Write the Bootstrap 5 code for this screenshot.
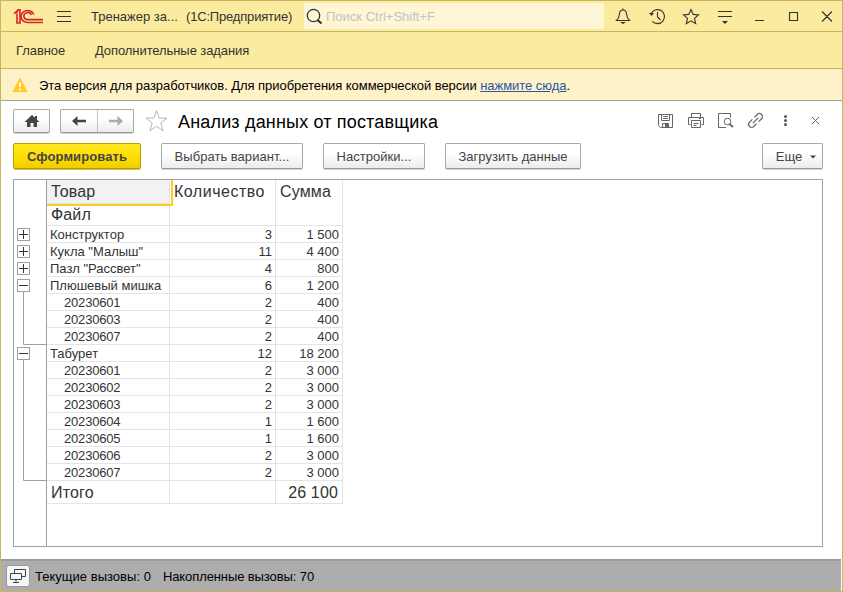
<!DOCTYPE html>
<html lang="ru">
<head>
<meta charset="utf-8">
<title>Анализ данных от поставщика</title>
<link href="https://cdn.jsdelivr.net/npm/bootstrap@5.3.0/dist/css/bootstrap.min.css" rel="stylesheet">
<style>
html,body{height:100%;overflow:hidden}
body{font-family:"Liberation Sans",Arial,sans-serif;font-size:13px;line-height:16px;color:#000;background:#fff}
svg{display:block;flex:none}
.win{width:843px;height:592px;border:1px solid #c8b560}
.win>*{flex:none}
.bar-title{height:31px;background:#fbeb9e;border-bottom:1px solid #c8b560;color:#333}
.bar-title>*,.bar-menu>*,.bar-info>*{flex:none}
.bar-title span{padding-top:1px}
.bar-menu{height:37px;background:#fbeb9e;border-bottom:1px solid #c8b560;color:#333;padding:2px 0 0 15px}
.bar-info{height:32px;background:#fff2c8;border-bottom:1px solid #a0a0a0;padding-left:11px}
.bar-info a{color:#2a56a5;text-decoration:underline}
.t-app{width:95px;margin-left:14px;letter-spacing:0}
.t-ent{width:118px;letter-spacing:-.18px}
.t-menu1{width:79px;letter-spacing:-.08px}
.t-menu2{letter-spacing:-.08px}
.t-info{letter-spacing:-.05px;margin-left:11px;padding-top:2px}
.search-box{width:300px;height:26px;background:#fff6d6;border-radius:2px;color:#c3c3c3;padding-left:2px}
.search-box span{margin-left:4px}
.tool-row{height:36px;padding-left:12px;margin-top:2px}
.cmd-row{height:27px;padding-left:12px;margin-top:4px}
.btn1c{--bs-btn-padding-x:0;--bs-btn-padding-y:0;--bs-btn-font-size:13px;--bs-btn-line-height:16px;--bs-btn-color:#444;--bs-btn-border-color:#a8a8a8;--bs-btn-border-radius:2px;height:26px;background:linear-gradient(#fff 40%,#ececec);border-bottom-color:#999;box-shadow:0 1px 0 #d4d4d4;letter-spacing:.03px;flex:none}
.cmd-row .btn1c{padding-top:2px}
.btn-home{width:37px;height:24px}
.btn-pair{width:74px;height:24px;margin-left:10px}
.pair-half{width:36px;height:22px}
.pair-half+.pair-half{border-left:1px solid #c4c4c4}
.btn-run{width:128px;background:linear-gradient(#ffe924,#ffdf00 50%,#f0cd00);border-color:#b5a000;box-shadow:0 1px 0 #d0c060;font-weight:700;letter-spacing:.1px}
.cmd-gap{margin-left:20px}
.w-var{width:142px}.w-set{width:102px}.w-load{width:136px}.w-more{width:61px;padding-left:7px;margin-right:19px}
.fav-star{margin-left:10px}
.form-title{font-size:18px;line-height:22px;margin-left:10px;letter-spacing:.17px;padding-top:1px}
.form-icons{margin-right:20px}
.report{width:810px;height:368px;margin:9px 0 0 12px;border:1px solid #a0a0a0}
.gutter{width:33px;height:366px;border-right:1px solid #a0a0a0}
.grid-t{border-collapse:separate;border-spacing:0;table-layout:fixed;width:296px;color:#333;font-size:13px;line-height:14px}
.grid-t td{height:17px;padding:2px 3px 0;border-right:1px solid #e4e4e4;border-bottom:1px solid #e4e4e4;white-space:nowrap}
.grid-t .sub-item{padding-left:17px;letter-spacing:-.18px}
.grid-t .num{text-align:right}
.grid-t .big td{font-size:16px;line-height:20px;padding:0 4px;letter-spacing:.15px}
.grid-t .h1r td{height:24px}.grid-t .h2r td{height:22px}
.grid-t .tot td{height:23px;padding-top:2px}
.grid-t .h1r .span-head{padding-top:2px}
.grid-t .h1r .qty-head{letter-spacing:.5px}
.grid-t .cur{background:#f2f2f2}
.focus-mark{left:0;top:0;width:126px;height:26px;border:solid #fc2;border-width:0 2px 2px 0}
.status{height:32px;width:840px;margin-top:12px;background:#adadad;border-top:2px solid #9c9c9c;padding-left:5px}
.status span{padding-top:1px}
.st-cur{margin-left:5px;letter-spacing:.02px}
.st-acc{margin-left:12px;letter-spacing:-.1px}
.status-btn{width:24px;height:22px;background:#f6f6f6;border:1px solid #999;border-radius:3px}
</style>
</head>
<body>
<div class="win d-flex flex-column">
  <header class="bar-title d-flex align-items-center">
    <svg width="76" height="30" viewBox="1 1 76 30" fill="none">
      <g stroke="#d8232a" stroke-width="1.600"><path d="M14.200 13.800l2.800-2.800v2.600M17 14v9h3V9.800h-1.500L14.500 13.500"/><path d="M33.800 14.500a6.600 6 0 1 0-5.800 8H43M31.300 15a3.800 3.500 0 1 0-3.400 4.600H43"/></g>
      <path d="M57 11.500h14M57 16.500h14M57 21.500h14" stroke="#333"/>
    </svg>
    <span class="t-app">Тренажер за...</span><span class="t-ent">(1С:Предприятие)</span>
    <div class="search-box d-flex align-items-center">
      <svg width="16" height="18" fill="none" stroke="#333"><circle cx="7.500" cy="8.500" r="6.200" stroke-width="1.300"/><path d="M11.500 13l4 3.500" stroke-width="2.200"/></svg>
      <span>Поиск Ctrl+Shift+F</span>
    </div>
    <svg width="237" height="30" viewBox="604 1 237 30" fill="none" stroke="#333" stroke-width="1.100">
      <path d="M616.500 20.500h13c-1.800-1.600-2.600-3-2.800-5.700c-.2-3.200-1.500-4.800-3.700-4.800s-3.500 1.600-3.700 4.800c-.2 2.700-1 4.100-2.800 5.700zM623 10V8.500"/><path d="M620 22h6l-3 2z" fill="#333" stroke="none"/>
      <path d="M651 14a7 7 0 1 1 1.300 7.300M657.500 12v5l3 3"/><path d="M649 13h5l-2.500 3z" fill="#333" stroke="none"/>
      <path d="M691 9.500l2.200 4.900 5.300.5-4 3.500 1.200 5.200-4.700-2.800-4.700 2.800 1.200-5.200-4-3.500 5.300-.5z"/>
      <path d="M718 11.500h14M718 16.500h14"/><path d="M722 21h6l-3 3z" fill="#333" stroke="none"/>
      <path d="M755 20.500h9M789.500 12.500h8v8h-8zM822 11.500l10 10M832 11.500l-10 10"/>
    </svg>
  </header>
  <nav class="bar-menu d-flex align-items-center"><span class="t-menu1">Главное</span><span class="t-menu2">Дополнительные задания</span></nav>
  <div class="bar-info d-flex align-items-center">
    <svg width="16" height="16"><path d="M8 1.500L15 14.500H1z" fill="#fc2" stroke="#fc2" stroke-linejoin="round"/><path d="M8 5.500v4.500M8 11.500v2" stroke="#fff" stroke-width="1.800"/></svg>
    <span class="t-info">Эта версия для разработчиков. Для приобретения коммерческой версии <a href="#">нажмите сюда</a>.</span>
  </div>
  <div class="tool-row d-flex align-items-center">
    <button class="btn btn1c btn-home d-flex align-items-center justify-content-center" aria-label="Домой"><svg width="16" height="14" fill="#444"><path d="M8 1L0.500 8H3v5h3.500V9h3v4H13V8h2.500L13 5.700V2h-2v1.800z"/></svg></button>
    <div class="btn btn1c btn-pair d-flex">
      <div class="pair-half d-flex align-items-center justify-content-center"><svg width="16" height="12"><path d="M1 6l5.500-5v3.700H15v2.600H6.500V11z" fill="#444"/></svg></div>
      <div class="pair-half d-flex align-items-center justify-content-center"><svg width="16" height="12"><path d="M15 6L9.500 1v3.700H1v2.600h8.500V11z" fill="#aaa"/></svg></div>
    </div>
    <svg class="fav-star" width="24" height="24" fill="none" stroke="#b2b8c0"><path d="M12.500 1.500l2.700 7.600h7.800l-6.200 4.900 2.300 7.800-6.600-4.600-6.600 4.600 2.300-7.800-6.200-4.900h7.800z"/></svg>
    <span class="form-title">Анализ данных от поставщика</span>
    <svg class="ms-auto form-icons" width="170" height="26" viewBox="652 108 170 26" fill="none" stroke="#666">
      <path d="M658.500 114.500h14v13h-12l-2-2zM661.500 114.500v6h8v-6M663 116.500h5M663 118.500h5M662.500 127.500v-4h6v4"/><path d="M665 124h3v3h-3z" fill="#666" stroke="none"/>
      <path d="M691.500 117.500v-4h9v4M690.500 124.500h-2v-7h15v7h-2M691.500 120.500h9v7h-9zM693.500 123.500h5M693.500 125.500h3M699 118.500h2"/>
      <path d="M726 127.500h-7.500v-14h12v4"/><circle cx="727.500" cy="121.500" r="3.300"/><path d="M729.500 124l3.500 3" stroke-width="1.800"/>
      <path transform="translate(755.500 120.500) rotate(-45)" d="M-1.500-3H-5.500a3 3 0 0 0 0 6H-1.500M1.500-3H5.500a3 3 0 0 1 0 6H1.500M-3.800 0H3.800" stroke-width="1.200"/>
      <g fill="#555" stroke="none"><circle cx="785.500" cy="116.500" r="1.500"/><circle cx="785.500" cy="120.500" r="1.500"/><circle cx="785.500" cy="124.500" r="1.500"/></g>
      <path d="M812 117l7 7M819 117l-7 7"/>
    </svg>
  </div>
  <div class="cmd-row d-flex align-items-start">
    <button class="btn btn1c btn-run">Сформировать</button>
    <button class="btn btn1c w-var cmd-gap">Выбрать вариант...</button>
    <button class="btn btn1c w-set cmd-gap">Настройки...</button>
    <button class="btn btn1c w-load cmd-gap">Загрузить данные</button>
    <button class="btn btn1c w-more ms-auto d-flex align-items-center justify-content-center">Еще<svg class="ms-2" width="6" height="4"><path d="M0 .5h6l-3 3z" fill="#444"/></svg></button>
  </div>
  <main class="report d-flex">
    <div class="gutter">
      <svg width="32" height="366" viewBox="14 180 32 366" fill="none">
        <g fill="#fff" stroke="#a0a0a0"><path d="M23.500 292v52.500H46M23.500 360v120.500H46" fill="none"/><rect x="17.500" y="228.500" width="12" height="12"/><rect x="17.500" y="245.500" width="12" height="12"/><rect x="17.500" y="262.500" width="12" height="12"/><rect x="17.500" y="279.500" width="12" height="12"/><rect x="17.500" y="347.500" width="12" height="12"/></g>
        <path d="M19 234.500h9M23.500 230v9M19 251.500h9M23.500 247v9M19 268.500h9M23.500 264v9M19 285.500h9M19 353.500h9" stroke="#333"/>
      </svg>
    </div>
    <div class="position-relative">
      <table class="grid-t">
        <colgroup><col style="width:123px"><col style="width:106px"><col style="width:67px"></colgroup>
        <tbody>
        <tr class="big h1r"><td class="cur">Товар</td><td rowspan="2" class="align-top span-head qty-head">Количество</td><td rowspan="2" class="align-top span-head">Сумма</td></tr>
        <tr class="big h2r"><td>Файл</td></tr>
        <tr><td>Конструктор</td><td class="num">3</td><td class="num">1 500</td></tr>
        <tr><td>Кукла "Малыш"</td><td class="num">11</td><td class="num">4 400</td></tr>
        <tr><td>Пазл "Рассвет"</td><td class="num">4</td><td class="num">800</td></tr>
        <tr><td>Плюшевый мишка</td><td class="num">6</td><td class="num">1 200</td></tr>
        <tr><td class="sub-item">20230601</td><td class="num">2</td><td class="num">400</td></tr>
        <tr><td class="sub-item">20230603</td><td class="num">2</td><td class="num">400</td></tr>
        <tr><td class="sub-item">20230607</td><td class="num">2</td><td class="num">400</td></tr>
        <tr><td>Табурет</td><td class="num">12</td><td class="num">18 200</td></tr>
        <tr><td class="sub-item">20230601</td><td class="num">2</td><td class="num">3 000</td></tr>
        <tr><td class="sub-item">20230602</td><td class="num">2</td><td class="num">3 000</td></tr>
        <tr><td class="sub-item">20230603</td><td class="num">2</td><td class="num">3 000</td></tr>
        <tr><td class="sub-item">20230604</td><td class="num">1</td><td class="num">1 600</td></tr>
        <tr><td class="sub-item">20230605</td><td class="num">1</td><td class="num">1 600</td></tr>
        <tr><td class="sub-item">20230606</td><td class="num">2</td><td class="num">3 000</td></tr>
        <tr><td class="sub-item">20230607</td><td class="num">2</td><td class="num">3 000</td></tr>
        <tr class="big tot"><td>Итого</td><td></td><td class="num">26 100</td></tr>
        </tbody>
      </table>
      <div class="focus-mark position-absolute"></div>
    </div>
  </main>
  <footer class="status d-flex align-items-center">
    <div class="status-btn d-flex align-items-center justify-content-center"><svg width="16" height="14" fill="none" stroke="#444"><path d="M4.500 4V.5h11v7H12M.5 4.500h11v6H.5zM6 10.500v3M3 13.500h6"/></svg></div>
    <span class="st-cur">Текущие вызовы: 0</span><span class="st-acc">Накопленные вызовы: 70</span>
  </footer>
</div>
<script src="https://cdn.jsdelivr.net/npm/bootstrap@5.3.0/dist/js/bootstrap.bundle.min.js"></script>
</body>
</html>
